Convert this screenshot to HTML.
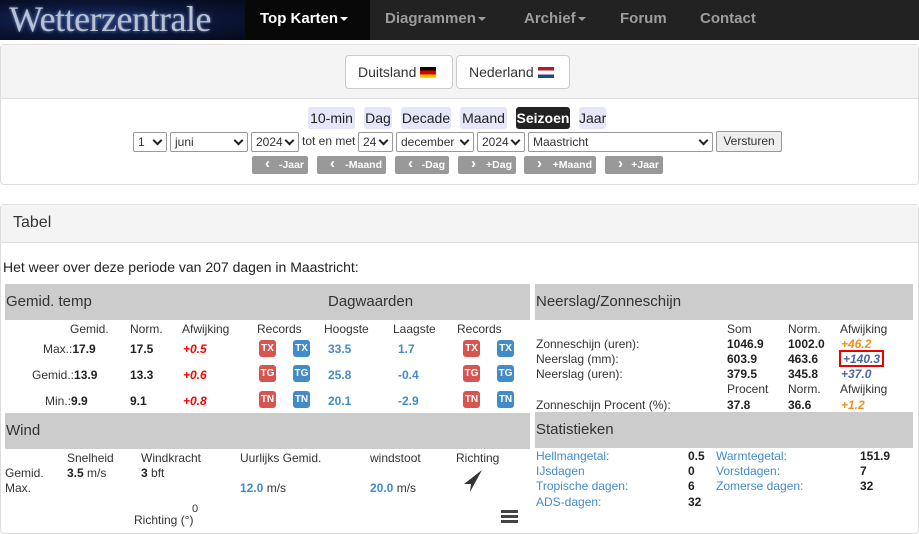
<!DOCTYPE html>
<html><head><meta charset="utf-8">
<style>
*{box-sizing:border-box;margin:0;padding:0}
body{width:919px;height:523px;overflow:hidden;background:#fff;font-family:"Liberation Sans",sans-serif;color:#333;position:relative;font-size:12px}
.a{position:absolute;white-space:nowrap}
.nav{left:0;top:0;width:919px;height:40px;background:#222}
.logo{left:0;top:0;width:245px;height:40px;background:radial-gradient(ellipse at 40% 50%,#1c2f6a 0%,#0a1433 60%,#050a1c 100%);overflow:hidden}
.logo span{position:absolute;left:9px;top:-2px;font-family:"Liberation Serif",serif;font-size:36px;color:#b8c2d2;letter-spacing:-0.5px;text-shadow:0 0 3px #6f86b8}
.mi{top:0;height:40px;line-height:37px;font-weight:bold;font-size:15px;color:#9d9d9d}
.car{display:inline-block;border-top:4px solid;border-left:4px solid transparent;border-right:4px solid transparent;vertical-align:middle;margin-left:2px}
.p1{left:0;top:44px;width:919px;height:141px;border:1px solid #ddd;border-radius:4px;background:#fff}
.p1h{left:1px;top:45px;width:917px;height:54px;background:#f4f4f4;border-bottom:1px solid #ddd}
.cb{top:55px;height:34px;border:1px solid #ccc;border-radius:4px;background:#fff;font-size:14px;line-height:32px;padding-left:12px;color:#333}
.flag{display:inline-block;width:16px;height:11px;vertical-align:-1px;margin-left:4px}
.pb{top:107px;height:22px;line-height:22px;font-size:14px;background:#e6e6fa;border-radius:3px;text-align:center;color:#222}
.sel{top:132px;height:20px;border:1px solid #999;border-radius:2px;background:#fff;font-size:12px;line-height:18px;padding-left:4px;color:#333}
.sel:after{content:"";position:absolute;right:5px;top:4px;width:5px;height:5px;border-right:2px solid #222;border-bottom:2px solid #222;transform:rotate(45deg)}
.nb{top:156px;height:18px;background:#999;border-radius:2px;color:#fff;font-weight:bold;font-size:10.5px;line-height:18px}
.nb i{font-style:normal;position:absolute;left:13px;top:-1px;font-size:15px}
.nb b{position:absolute;right:4px}
.p2{left:0;top:204px;width:919px;height:330px;border:1px solid #ddd;border-radius:4px}
.p2h{left:1px;top:205px;width:917px;height:38px;background:#f4f4f4;border-bottom:1px solid #ddd}
.gh{height:36px;background:#ccc;font-size:15px;line-height:36px;padding-left:1px;color:#333}
.b{font-weight:bold;color:#222}
.r{color:#f00;font-weight:bold;font-style:italic}
.bl{color:#428bca}
.blb{color:#428bca;font-weight:bold}
.o{color:#f0901c;font-weight:bold;font-style:italic}
.bi{color:#4a6a9a;font-weight:bold;font-style:italic}
.bd{width:17px;height:17px;border-radius:3px;color:#fff;font-weight:bold;font-size:10px;line-height:17px;text-align:center}
.rd{background:#d9534f}.bu{background:#428bca}
</style></head><body>
<div class="a nav"></div>
<div class="a logo"><span>Wetterzentrale</span></div>
<div class="a" style="left:245px;top:0;width:125px;height:40px;background:#080808"></div>
<div class="a mi" style="left:260px;color:#fff">Top Karten<span class="car"></span></div>
<div class="a mi" style="left:385px">Diagrammen<span class="car"></span></div>
<div class="a mi" style="left:524px">Archief<span class="car"></span></div>
<div class="a mi" style="left:620px">Forum</div>
<div class="a mi" style="left:700px">Contact</div>

<div class="a p1"></div>
<div class="a p1h"></div>
<div class="a cb" style="left:345px;width:108px">Duitsland<span class="flag" style="background:linear-gradient(#000 33%,#d00 33%,#d00 66%,#fc0 66%)"></span></div>
<div class="a cb" style="left:456px;width:114px">Nederland<span class="flag" style="background:linear-gradient(#ae1c28 33%,#fff 33%,#fff 66%,#21468b 66%)"></span></div>

<div class="a pb" style="left:308px;width:47px">10-min</div>
<div class="a pb" style="left:364px;width:28px">Dag</div>
<div class="a pb" style="left:401px;width:50px">Decade</div>
<div class="a pb" style="left:460px;width:47px">Maand</div>
<div class="a pb" style="left:516px;width:54px;background:#222;color:#fff;font-weight:bold">Seizoen</div>
<div class="a pb" style="left:579px;width:27px">Jaar</div>

<div class="a sel" style="left:133px;width:34px">1</div>
<div class="a sel" style="left:170px;width:78px">juni</div>
<div class="a sel" style="left:251px;width:48px">2024</div>
<div class="a" style="left:302px;top:134px;font-size:12px">tot en met</div>
<div class="a sel" style="left:358px;width:35px">24</div>
<div class="a sel" style="left:396px;width:78px">december</div>
<div class="a sel" style="left:477px;width:48px">2024</div>
<div class="a sel" style="left:528px;width:185px">Maastricht</div>
<div class="a" style="left:716px;top:131px;width:66px;height:21px;border:1px solid #999;border-radius:2px;background:#eee;font-size:12px;line-height:19px;text-align:center">Versturen</div>

<div class="a nb" style="left:252px;width:56px"><i>‹</i><b>-Jaar</b></div>
<div class="a nb" style="left:317px;width:69px"><i>‹</i><b>-Maand</b></div>
<div class="a nb" style="left:395px;width:54px"><i>‹</i><b>-Dag</b></div>
<div class="a nb" style="left:458px;width:58px"><i>›</i><b>+Dag</b></div>
<div class="a nb" style="left:524px;width:72px"><i>›</i><b>+Maand</b></div>
<div class="a nb" style="left:605px;width:58px"><i>›</i><b>+Jaar</b></div>

<div class="a p2"></div>
<div class="a p2h"></div>
<div class="a" style="left:13px;top:214px;font-size:16px">Tabel</div>
<div class="a" style="left:3px;top:259px;font-size:14px;color:#222">Het weer over deze periode van 207 dagen in Maastricht:</div>

<div class="a gh" style="left:5px;top:284px;width:525px">Gemid. temp<span style="position:absolute;left:323px">Dagwaarden</span></div>
<div class="a" style="left:70px;top:322px">Gemid.</div>
<div class="a" style="left:130px;top:322px">Norm.</div>
<div class="a" style="left:182px;top:322px">Afwijking</div>
<div class="a" style="left:257px;top:322px">Records</div>
<div class="a" style="left:324px;top:322px">Hoogste</div>
<div class="a" style="left:393px;top:322px">Laagste</div>
<div class="a" style="left:457px;top:322px">Records</div>

<div class="a" style="left:43px;top:342px">Max.:<span class="b">17.9</span></div>
<div class="a b" style="left:130px;top:342px">17.5</div>
<div class="a r" style="left:183px;top:342px">+0.5</div>
<div class="a" style="left:32px;top:368px">Gemid.:<span class="b">13.9</span></div>
<div class="a b" style="left:130px;top:368px">13.3</div>
<div class="a r" style="left:183px;top:368px">+0.6</div>
<div class="a" style="left:45px;top:394px">Min.:<span class="b">9.9</span></div>
<div class="a b" style="left:130px;top:394px">9.1</div>
<div class="a r" style="left:183px;top:394px">+0.8</div>

<div class="a bd rd" style="left:259px;top:340px">TX</div><div class="a bd bu" style="left:293px;top:340px">TX</div>
<div class="a bd rd" style="left:259px;top:365px">TG</div><div class="a bd bu" style="left:293px;top:365px">TG</div>
<div class="a bd rd" style="left:259px;top:391px">TN</div><div class="a bd bu" style="left:293px;top:391px">TN</div>
<div class="a blb" style="left:328px;top:342px">33.5</div><div class="a blb" style="left:398px;top:342px">1.7</div>
<div class="a blb" style="left:328px;top:368px">25.8</div><div class="a blb" style="left:398px;top:368px">-0.4</div>
<div class="a blb" style="left:328px;top:394px">20.1</div><div class="a blb" style="left:398px;top:394px">-2.9</div>
<div class="a bd rd" style="left:463px;top:340px">TX</div><div class="a bd bu" style="left:497px;top:340px">TX</div>
<div class="a bd rd" style="left:463px;top:365px">TG</div><div class="a bd bu" style="left:497px;top:365px">TG</div>
<div class="a bd rd" style="left:463px;top:391px">TN</div><div class="a bd bu" style="left:497px;top:391px">TN</div>

<div class="a gh" style="left:5px;top:413px;width:525px">Wind</div>
<div class="a" style="left:67px;top:451px">Snelheid</div>
<div class="a" style="left:141px;top:451px">Windkracht</div>
<div class="a" style="left:240px;top:451px">Uurlijks Gemid.</div>
<div class="a" style="left:370px;top:451px">windstoot</div>
<div class="a" style="left:456px;top:451px">Richting</div>
<div class="a" style="left:5px;top:466px">Gemid.</div>
<div class="a" style="left:67px;top:466px"><span class="b">3.5</span> m/s</div>
<div class="a" style="left:141px;top:466px"><span class="b">3</span> bft</div>
<div class="a" style="left:5px;top:481px">Max.</div>
<div class="a" style="left:240px;top:481px"><span class="blb">12.0</span> m/s</div>
<div class="a" style="left:370px;top:481px"><span class="blb">20.0</span> m/s</div>
<svg class="a" style="left:462px;top:468px" width="22" height="26"><path d="M20 2 L2 16 L9 16 L8 24 Z" fill="#333"/></svg>
<div class="a" style="left:192px;top:503px;font-size:11px">0</div>
<div class="a" style="left:134px;top:513px">Richting (°)</div>
<div class="a" style="left:501px;top:510px;width:17px;height:3px;background:#444;box-shadow:0 5px 0 #444,0 10px 0 #444"></div>

<div class="a gh" style="left:535px;top:284px;width:378px">Neerslag/Zonneschijn</div>
<div class="a" style="left:727px;top:322px">Som</div>
<div class="a" style="left:788px;top:322px">Norm.</div>
<div class="a" style="left:840px;top:322px">Afwijking</div>
<div class="a" style="left:536px;top:337px">Zonneschijn (uren):</div>
<div class="a b" style="left:727px;top:337px">1046.9</div>
<div class="a b" style="left:788px;top:337px">1002.0</div>
<div class="a o" style="left:841px;top:337px">+46.2</div>
<div class="a" style="left:536px;top:352px">Neerslag (mm):</div>
<div class="a b" style="left:727px;top:352px">603.9</div>
<div class="a b" style="left:788px;top:352px">463.6</div>
<div class="a bi" style="left:839px;top:350px;border:2px solid #e00;padding:0 2px;height:17px;line-height:14px">+140.3</div>
<div class="a" style="left:536px;top:367px">Neerslag (uren):</div>
<div class="a b" style="left:727px;top:367px">379.5</div>
<div class="a b" style="left:788px;top:367px">345.8</div>
<div class="a bi" style="left:841px;top:367px">+37.0</div>
<div class="a" style="left:727px;top:382px">Procent</div>
<div class="a" style="left:788px;top:382px">Norm.</div>
<div class="a" style="left:840px;top:382px">Afwijking</div>
<div class="a" style="left:536px;top:398px">Zonneschijn Procent (%):</div>
<div class="a b" style="left:727px;top:398px">37.8</div>
<div class="a b" style="left:788px;top:398px">36.6</div>
<div class="a o" style="left:841px;top:398px">+1.2</div>

<div class="a gh" style="left:535px;top:412px;width:378px">Statistieken</div>
<div class="a bl" style="left:536px;top:449px">Hellmangetal:</div><div class="a b" style="left:688px;top:449px">0.5</div>
<div class="a bl" style="left:716px;top:449px">Warmtegetal:</div><div class="a b" style="left:860px;top:449px">151.9</div>
<div class="a bl" style="left:536px;top:464px">IJsdagen</div><div class="a b" style="left:688px;top:464px">0</div>
<div class="a bl" style="left:716px;top:464px">Vorstdagen:</div><div class="a b" style="left:860px;top:464px">7</div>
<div class="a bl" style="left:536px;top:479px">Tropische dagen:</div><div class="a b" style="left:688px;top:479px">6</div>
<div class="a bl" style="left:716px;top:479px">Zomerse dagen:</div><div class="a b" style="left:860px;top:479px">32</div>
<div class="a bl" style="left:536px;top:495px">ADS-dagen:</div><div class="a b" style="left:688px;top:495px">32</div>
</body></html>
